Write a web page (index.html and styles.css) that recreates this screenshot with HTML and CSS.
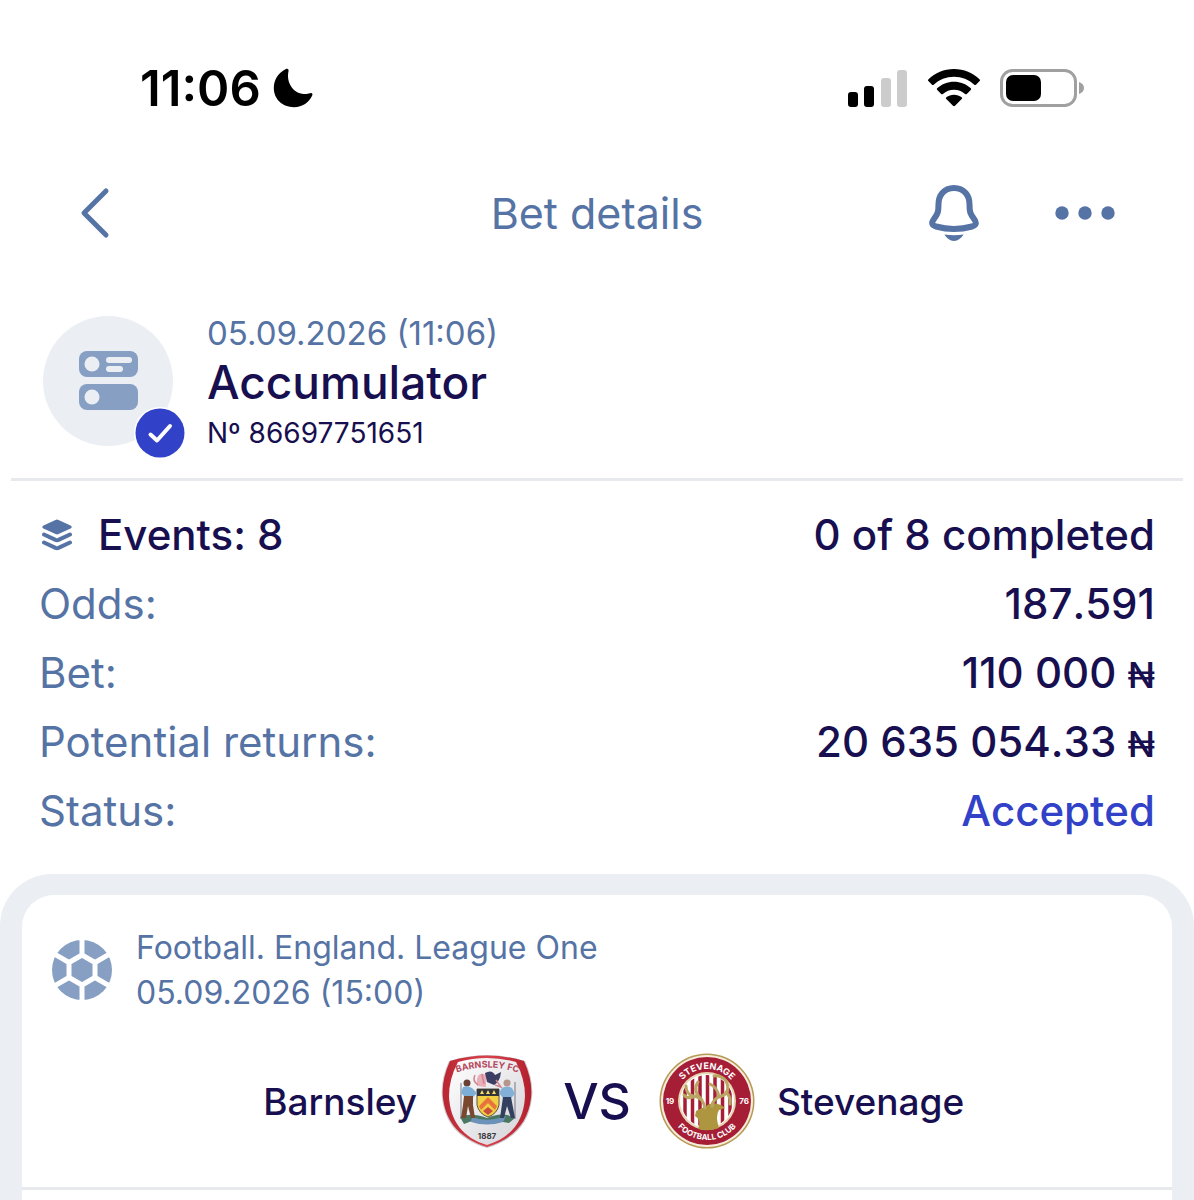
FILE: index.html
```html
<!DOCTYPE html>
<html lang="en">
<head>
    <meta charset="UTF-8">
    <meta name="viewport" content="width=device-width, initial-scale=1.0">
    <title>Bet details</title>
    <link rel="stylesheet" href="styles.css">
</head>
<body>
    <div class="status-bar">
        <div class="status-time">
            <span>11:06</span>
            <svg class="moon" viewBox="0 0 40 40" aria-hidden="true">
                <path d="M12.500 1.200C14.500 .3 16 1.300 15.500 3.200C13 14 20 25.500 31 26C33.500 26.100 35.500 25.700 37 25.200C39 24.600 40 25.800 39.200 27.500C36 34.500 29.500 39.200 21 39.200C9.500 39.200 .8 31 .8 20C.8 11.500 5.500 4.500 12.500 1.200Z"/>
            </svg>
        </div>
        <div class="status-icons">
            <svg class="signal" viewBox="0 0 60 38" aria-hidden="true">
                <rect x="0" y="23" width="10" height="15" rx="3"/>
                <rect x="16" y="17" width="10" height="21" rx="3"/>
                <rect class="off" x="33" y="9" width="10" height="29" rx="3"/>
                <rect class="off" x="49" y="1" width="10" height="37" rx="3"/>
            </svg>
            <svg class="wifi" viewBox="0 0 52 38" aria-hidden="true">
                <path d="M26 0C36 0 45 3.800 51.500 10.200C52.200 10.900 52.200 11.500 51.600 12.100L48 15.700C47.500 16.200 46.900 16.200 46.300 15.700C40.800 10.700 33.800 7.800 26 7.800S11.200 10.700 5.700 15.700C5.100 16.200 4.500 16.200 4 15.700L.4 12.100C-.2 11.500-.2 10.900.5 10.200C7 3.800 16 0 26 0Z"/>
                <path d="M26 12.800C32.500 12.800 38.200 15.200 42.600 19.100C43.300 19.800 43.300 20.400 42.700 21L38.800 24.900C38.300 25.400 37.700 25.400 37.100 24.900C34 22.300 30.200 20.700 26 20.700S18 22.300 14.900 24.900C14.300 25.400 13.700 25.400 13.200 24.900L9.300 21C8.700 20.400 8.700 19.800 9.400 19.100C13.800 15.200 19.500 12.800 26 12.800Z"/>
                <path d="M26 25.800C28.900 25.800 31.500 26.700 33.600 28.200C34.300 28.700 34.300 29.400 33.700 30L27 36.800C26.400 37.400 25.600 37.400 25 36.800L18.300 30C17.700 29.400 17.700 28.700 18.400 28.200C20.500 26.700 23.100 25.800 26 25.800Z"/>
            </svg>
            <svg class="battery" viewBox="0 0 84 38" aria-hidden="true">
                <rect class="shell" x="1.500" y="1.500" width="74" height="35" rx="11"/>
                <rect x="6" y="6" width="35" height="26" rx="7"/>
                <path class="cap" d="M79 13C82 14 84 16 84 19S82 24 79 25Z"/>
            </svg>
        </div>
    </div>

    <header class="nav">
        <button class="nav-button back" type="button" aria-label="Back">
            <svg viewBox="0 0 32 52" width="32" height="52"><path d="M27 4L5 26L27 48"/></svg>
        </button>
        <h1>Bet details</h1>
        <div class="nav-actions">
            <button class="nav-button" type="button" aria-label="Notifications">
                <svg viewBox="0 0 50 56" width="50" height="56">
                    <path d="M25 3C14.500 3 9.500 11 9.500 19C9.500 28 8.500 29 4.600 34.500C2.200 38 2.800 40.500 7 41.500C18 44.500 32 44.500 43 41.500C47.200 40.500 47.800 38 45.400 34.500C41.500 29 40.500 28 40.500 19C40.500 11 35.500 3 25 3Z"/>
                    <path class="solid" d="M15.500 49.500C21.500 50.500 28.500 50.500 34.500 49.500C32.500 53 29 56 25 56S17.500 53 15.500 49.500Z"/>
                </svg>
            </button>
            <button class="nav-button" type="button" aria-label="More">
                <svg viewBox="0 0 60 14" width="60" height="14">
                    <circle class="solid" cx="7" cy="7" r="6.700"/>
                    <circle class="solid" cx="30" cy="7" r="6.700"/>
                    <circle class="solid" cx="53" cy="7" r="6.700"/>
                </svg>
            </button>
        </div>
    </header>

    <main>
        <section class="ticket">
            <div class="ticket-icon">
                <svg viewBox="0 0 130 130" width="130" height="130" aria-hidden="true">
                    <circle class="disc" cx="65" cy="65" r="65"/>
                    <rect class="slab" x="36" y="35" width="59" height="26" rx="8"/>
                    <rect class="slab" x="36" y="68" width="59" height="26" rx="8"/>
                    <circle class="disc" cx="49" cy="48" r="7.500"/>
                    <circle class="disc" cx="49" cy="81" r="7.500"/>
                    <rect class="disc" x="63" y="41" width="26" height="6" rx="3"/>
                    <rect class="disc" x="63" y="50" width="17" height="6" rx="3"/>
                </svg>
                <svg class="ticket-badge" viewBox="0 0 54 54" aria-hidden="true">
                    <circle class="ring" cx="27" cy="27" r="26"/>
                    <circle class="fill" cx="27" cy="27" r="24.500"/>
                    <path d="M17.500 28.500L24 34.500L37 20"/>
                </svg>
            </div>
            <div class="ticket-text">
                <p class="date">05.09.2026 (11:06)</p>
                <h2>Accumulator</h2>
                <p class="number">Nº 86697751651</p>
            </div>
        </section>

        <dl class="summary">
            <div class="row row-events">
                <dt>
                    <svg viewBox="0 0 30 32" width="30" height="32" aria-hidden="true">
                        <path d="M13.500 .9Q15 .2 16.500 .9L28.500 6.600Q31 8 28.500 9.400L16.500 15.100Q15 15.800 13.500 15.100L1.500 9.400Q-1 8 1.500 6.600Z"/>
                        <path class="line" d="M2 15.500L13.500 20.900Q15 21.500 16.500 20.900L28 15.500"/>
                        <path class="line" d="M2 23.500L13.500 28.900Q15 29.500 16.500 28.900L28 23.500"/>
                    </svg>
                    Events: 8
                </dt>
                <dd>0 of 8 completed</dd>
            </div>
            <div class="row">
                <dt>Odds:</dt>
                <dd>187.591</dd>
            </div>
            <div class="row">
                <dt>Bet:</dt>
                <dd>110 000 <span class="currency">₦</span></dd>
            </div>
            <div class="row">
                <dt>Potential returns:</dt>
                <dd>20 635 054.33 <span class="currency">₦</span></dd>
            </div>
            <div class="row">
                <dt>Status:</dt>
                <dd class="accepted">Accepted</dd>
            </div>
        </dl>

        <section class="events">
            <article class="event">
                <div class="event-head">
                    <svg class="ball" viewBox="0 0 60 60" aria-hidden="true">
                        <circle cx="30" cy="30" r="30"/>
                        <path d="M30 15L43 22.500V37.500L30 45L17 37.500V22.500ZM30 15V-2M30 45V62M43 22.500L60 12.700M43 37.500L60 47.300M17 22.500L0 12.700M17 37.500L0 47.300"/>
                    </svg>
                    <div>
                        <p>Football. England. League One</p>
                        <p>05.09.2026 (15:00)</p>
                    </div>
                </div>

                <div class="teams">
                    <div class="team home">
                        <span>Barnsley</span>
                        <svg class="crest" viewBox="0 0 96 96" role="img" aria-label="Barnsley FC">
                            <defs>
                                <linearGradient id="shield" x1="0" y1="0" x2="1" y2="1">
                                    <stop offset="0" stop-color="#ffffff"/>
                                    <stop offset="1" stop-color="#d4d3d9"/>
                                </linearGradient>
                                <linearGradient id="shield-edge" x1="0" y1="0" x2="1" y2="0">
                                    <stop offset="0" stop-color="#b92632"/>
                                    <stop offset="0.500" stop-color="#d9434c"/>
                                    <stop offset="1" stop-color="#b3202d"/>
                                </linearGradient>
                                <path id="barnsley-top" d="M14 21Q48 8 83 21"/>
                            </defs>
                            <path d="M10 8Q48-4 86 8Q95 28 93 45C90 72 74 87 48 95C22 87 6 72 3 45Q1 28 10 8Z" fill="#c9c9ce"/>
                            <path d="M11 8Q48-3 85 8Q94 28 92 45C89 71 73 86 48 94C23 86 7 71 4 45Q2 28 11 8Z" fill="url(#shield-edge)"/>
                            <path d="M19 9Q48 1 77 9Q86 26 86 43C85 68 72 85 48 92C24 85 11 68 10 43Q10 26 19 9Z" fill="url(#shield)"/>
                            <text class="crest-red"><textPath href="#barnsley-top" startOffset="50%">BARNSLEY FC</textPath></text>
                            <!-- helmet plume and phoenix -->
                            <path d="M38 26Q40 18 47 22L47 34L38 33Z" fill="#e9aeb8"/>
                            <path d="M46 20Q53 16 56 22L62 19Q61 29 55 32L48 29Z" fill="#3c3e63"/>
                            <path d="M36 22Q33 28 39 32M57 27L62 34L56 32M43 21L45 31" fill="none" stroke="#cf8591" stroke-width="1.500"/>
                            <!-- ground -->
                            <path d="M21 64Q32 59 48 65Q64 58 76 65L70 70L58 68L46 71L33 68L25 71Z" fill="#4a7761"/>
                            <path d="M33 64Q48 70 67 63L64 69Q48 74 32 69Z" fill="#6d92b9"/>
                            <!-- shield of arms -->
                            <path d="M38 36H60V52Q58 61 49 64Q40 61 38 52Z" fill="#f1cf43" stroke="#5f543c"/>
                            <path d="M38 36H60V43H38Z" fill="#34343b"/>
                            <path d="M41 41L43 37L45 41ZM47 41L49 37L51 41ZM53 41L55 37L57 41Z" fill="#f4dc65"/>
                            <path d="M40 53L49 44L58 53L56 57L49 50L42 57Z" fill="#e7743b"/>
                            <path d="M44 58L49 54L54 58L49 62Z" fill="#c94d3c"/>
                            <!-- supporters -->
                            <path d="M22 30V66M76 29V66" stroke="#777783"/>
                            <circle cx="28" cy="30" r="3.500" fill="#6a4035"/>
                            <path d="M24 34Q28 32 33 35L38 40L34 44H26L22 40Z" fill="#7caed6"/>
                            <path d="M25 43H34V52L36 65H32L29 53L27 65H22L24 52Z" fill="#79482f"/>
                            <circle cx="68" cy="30" r="3.500" fill="#b4968b"/>
                            <path d="M63 35Q68 32 73 35L76 41L72 45H64L60 40Z" fill="#83b0d6"/>
                            <path d="M64 44H72L76 65H72L68 53L65 65H61Z" fill="#33405e"/>
                            <text class="crest-year" x="48" y="86">1887</text>
                        </svg>
                    </div>
                    <strong class="versus">VS</strong>
                    <div class="team away">
                        <svg class="crest" viewBox="0 0 96 96" role="img" aria-label="Stevenage Football Club">
                            <defs>
                                <clipPath id="stevenage-centre"><circle cx="48" cy="48" r="26"/></clipPath>
                                <path id="stevenage-top" d="M16 48A32 32 0 0 1 80 48"/>
                                <path id="stevenage-bottom" d="M9 48A39 39 0 0 0 87 48"/>
                            </defs>
                            <circle cx="48" cy="48" r="47.500" fill="#b59a55"/>
                            <circle cx="48" cy="48" r="46" fill="#f7ecdc"/>
                            <circle cx="48" cy="48" r="44" fill="#a51e36"/>
                            <circle cx="48" cy="48" r="29" fill="#e8d5b1"/>
                            <circle cx="48" cy="48" r="27" fill="#ffffff"/>
                            <g clip-path="url(#stevenage-centre)">
                                <path d="M26 20V76M33.500 20V76M41 20V76M48.500 20V76M56 20V76M63.500 20V76M71 20V76" stroke="#a51e36" stroke-width="3.500"/>
                            </g>
                            <path d="M39 76Q43 67 36 63L37 58L47 53Q52 48 62 52L66 55L60 57Q56 63 60 75Q49 79 39 76Z" fill="#ad963f"/>
                            <path d="M46 55Q44 44 34 43Q27 41 27 33M37 43Q29 47 25 42M43 47Q33 38 39 29M53 53Q54 45 63 43Q72 39 67 28Q62 22 55 23M60 44Q59 35 51 31M68 40Q72 45 71 51" fill="none" stroke="#b8a662" stroke-width="3" stroke-linecap="round"/>
                            <text class="crest-white large"><textPath href="#stevenage-top" startOffset="50%">STEVENAGE</textPath></text>
                            <text class="crest-white"><textPath href="#stevenage-bottom" startOffset="50%">FOOTBALL CLUB</textPath></text>
                            <text class="crest-white" x="11" y="51">19</text>
                            <text class="crest-white" x="85" y="51">76</text>
                        </svg>
                        <span>Stevenage</span>
                    </div>
                </div>
            </article>
        </section>
    </main>
</body>
</html>
```
FILE: styles.css
```css
/* Global */
* {
    box-sizing: border-box;
}
body {
    font-family: Inter, "Liberation Sans", sans-serif;
    background-color: #ffffff;
    color: #170f4f;
    margin: 0;
    min-height: 100vh;
    display: flex;
    flex-direction: column;
}
h1, h2, p, dl, dd {
    margin: 0;
}
svg {
    display: block;
    flex-shrink: 0;
}

/* Status bar */
.status-bar {
    display: flex;
    justify-content: space-between;
    align-items: center;
    height: 176px;
    padding: 0 110px 0 140px;
    color: #000000;
}
.status-time {
    display: flex;
    align-items: center;
    gap: 12px;
    font-size: 49px;
    font-weight: 600;
}
.moon {
    width: 40px;
    height: 40px;
}
.status-icons {
    display: flex;
    gap: 20px;
}
.signal {
    width: 60px;
    height: 38px;
}
.signal .off {
    fill: #cccccc;
}
.wifi {
    width: 52px;
    height: 38px;
}
.battery {
    width: 84px;
    height: 38px;
}
.battery .shell {
    fill: none;
    stroke: #a0a0a0;
    stroke-width: 3;
}
.battery .cap {
    fill: #a0a0a0;
}

/* Navigation */
.nav {
    display: grid;
    grid-template-columns: 1fr auto 1fr;
    align-items: center;
    height: 74px;
    padding: 0 79px;
    color: #5573a4;
}
.nav h1 {
    font-size: 43px;
    font-weight: 400;
}
.nav-actions {
    display: flex;
    justify-content: flex-end;
    align-items: center;
    gap: 76px;
}
.nav-button {
    padding: 0;
    border: 0;
    background: none;
    color: inherit;
    cursor: pointer;
}
.nav-button svg {
    fill: none;
    stroke: currentColor;
    stroke-width: 6;
    stroke-linecap: round;
    stroke-linejoin: round;
}
.nav-button .solid {
    fill: currentColor;
    stroke: none;
}
.back {
    justify-self: start;
}
.back svg {
    stroke-width: 5;
}

/* Ticket */
main {
    flex: 1;
    display: flex;
    flex-direction: column;
}
.ticket {
    display: flex;
    align-items: flex-start;
    gap: 34px;
    margin: 60px 11px 0;
    padding: 6px 32px 26px;
    border-bottom: 3px solid #e8e9ec;
}
.ticket-icon {
    position: relative;
}
.ticket-icon .disc {
    fill: #ebeff4;
}
.ticket-icon .slab {
    fill: #879fc3;
}
.ticket-badge {
    position: absolute;
    right: -14px;
    bottom: -14px;
    width: 54px;
    height: 54px;
}
.ticket-badge .ring {
    fill: #ffffff;
}
.ticket-badge .fill {
    fill: #3242c8;
}
.ticket-badge path {
    fill: none;
    stroke: #ffffff;
    stroke-width: 4;
    stroke-linecap: round;
    stroke-linejoin: round;
}
.ticket .date {
    font-size: 33px;
    line-height: 34px;
    color: #5573a4;
}
.ticket h2 {
    font-size: 46px;
    line-height: 64px;
    font-weight: 500;
}
.ticket .number {
    font-size: 28px;
    line-height: 38px;
}

/* Summary */
.summary {
    padding: 19px 39px 29px;
    font-size: 42px;
    line-height: 69px;
}
.row {
    display: flex;
    justify-content: space-between;
}
.row dt {
    color: #5573a4;
}
.row dd {
    font-weight: 500;
    font-kerning: none;
}
.row-events dt {
    display: flex;
    align-items: center;
    gap: 26px;
    padding-left: 3px;
    color: inherit;
    font-weight: 500;
}
.row-events svg {
    fill: #5573a4;
}
.row-events .line {
    fill: none;
    stroke: #5573a4;
    stroke-width: 4;
    stroke-linecap: round;
}
.row .accepted {
    color: #3242c8;
}
.currency {
    font-size: 36px;
    line-height: 1;
}

/* Events */
.events {
    flex: 1;
    display: flex;
    flex-direction: column;
    padding: 21px 22px 0;
    background-color: #ebeff4;
    border-radius: 52px 52px 0 0;
}
.event {
    flex: 1;
    background-color: #ffffff;
    border-radius: 32px 32px 0 0;
}
.event-head {
    display: flex;
    align-items: center;
    gap: 24px;
    padding: 30px 30px 0;
    font-size: 32px;
    line-height: 45px;
    color: #5573a4;
}
.ball {
    width: 60px;
    height: 60px;
    fill: #879fc3;
}
.ball path {
    fill: none;
    stroke: #ffffff;
    stroke-width: 5;
}
.teams {
    display: grid;
    grid-template-columns: 1fr auto 1fr;
    align-items: center;
    gap: 28px;
    padding: 38px 30px;
    border-bottom: 3px solid #e8e9ec;
}
.team {
    display: flex;
    align-items: center;
    gap: 22px;
    font-size: 37px;
    font-weight: 500;
}
.home {
    justify-content: flex-end;
}
.versus {
    font-size: 50px;
    font-weight: 500;
}

/* Club crests */
.crest {
    width: 96px;
    height: 96px;
}
.crest text {
    font-weight: 700;
    text-anchor: middle;
}
.crest-red {
    font-size: 9px;
    fill: #b5475b;
}
.crest-year {
    font-size: 8px;
    fill: #3e3b42;
}
.crest-white {
    font-size: 8px;
    fill: #ffffff;
}
.crest-white.large {
    font-size: 9px;
}
```
